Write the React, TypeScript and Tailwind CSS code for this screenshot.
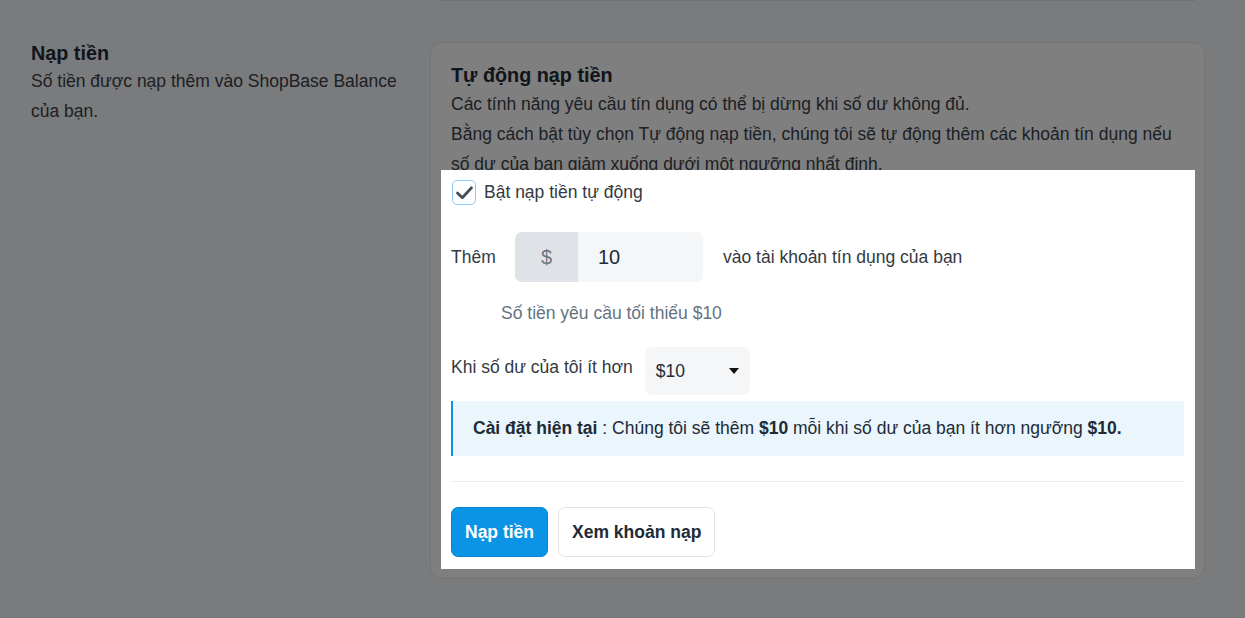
import React from "react";

const Check = () => (
  <svg viewBox="0 0 24 24" className="w-[21px] h-[21px]">
    <polyline
      points="4 12.5 9.5 18 20 6.5"
      fill="none"
      stroke="#454f5b"
      strokeWidth="3.2"
      strokeLinecap="round"
      strokeLinejoin="round"
    />
  </svg>
);

const Caret = () => (
  <svg viewBox="0 0 10 6" className="w-[12px] h-[6px]">
    <path d="M0 0 L10 0 L5 6 Z" fill="#111" />
  </svg>
);

export default function App() {
  return (
    <div
      className="relative w-full h-[618px] overflow-hidden bg-[#f4f6f8] text-[17.5px] text-[#3a4149]"
      style={{ fontFamily: '"Liberation Sans", Arial, sans-serif' }}
    >
      {/* Spotlight overlay */}
      <div className="absolute inset-0 z-10 bg-black/50" />

      <div className="flex pl-[31px] pr-[40px]">
        {/* Left column */}
        <div className="w-[372px] pt-[41px] shrink-0">
          <h2 className="text-[19.8px] font-bold leading-[24px] text-[#212b36]">Nạp tiền</h2>
          <p className="leading-[30px] mt-[1px]">
            Số tiền được nạp thêm vào ShopBase Balance của bạn.
          </p>
        </div>

        {/* Right column */}
        <div className="flex-1 ml-[27px]">
          <div className="h-px mx-[10px] bg-[#dfe3e8]" />
          <div className="mt-[41px] bg-white border border-[#e3e6ea] rounded-xl px-[20px] pt-[20px] pb-[19px]">
            <h3 className="text-[19.8px] font-bold leading-[24px] text-[#212b36]">Tự động nạp tiền</h3>
            <p className="leading-[30px] mt-[2px]">
              Các tính năng yêu cầu tín dụng có thể bị dừng khi số dư không đủ.
              <br />
              Bằng cách bật tùy chọn Tự động nạp tiền, chúng tôi sẽ tự động thêm các khoản tín dụng nếu
              số dư của bạn giảm xuống dưới một ngưỡng nhất định.
            </p>

            {/* Highlighted section */}
            <div className="relative z-20 bg-white -ml-[10px] -mr-[11px] -mt-[9px] -mb-[10px] pl-[10px] pr-[11px] pt-[10px] pb-[12px] text-[#333a42]">
              <label className="flex items-center gap-[8px] h-[25px]">
                <span className="w-[24px] h-[25px] ml-px border border-[#8ec9f5] rounded-[5px] flex items-center justify-center">
                  <Check />
                </span>
                <span>Bật nạp tiền tự động</span>
              </label>

              <div className="flex items-center mt-[27px] h-[50px]">
                <span className="w-[64px]">Thêm</span>
                <div className="flex h-[50px] w-[188px] rounded-[7px] overflow-hidden bg-[#f4f6f8]">
                  <div className="w-[63px] bg-[#dfe3e8] flex items-center justify-center text-[20px] text-[#6b7682]">
                    $
                  </div>
                  <div className="flex items-center pl-[20px] text-[20px] text-[#212b36]">10</div>
                </div>
                <span className="ml-[20px]">vào tài khoản tín dụng của bạn</span>
              </div>

              <p className="mt-[21px] ml-[50px] leading-[20px] text-[#637381]">
                Số tiền yêu cầu tối thiểu $10
              </p>

              <div className="flex items-center mt-[24px]">
                <span className="-mt-[8px]">Khi số dư của tôi ít hơn</span>
                <div className="ml-[12px] w-[105px] h-[48px] rounded-[7px] bg-[#f4f6f8] flex items-center justify-between pl-[11px] pr-[10px]">
                  <span className="text-[#212b36]">$10</span>
                  <Caret />
                </div>
              </div>

              <div className="mt-[6px] h-[55px] border-l-2 border-[#0b93e6] bg-[#eaf5fc] flex items-center pl-[20px] text-[#212b36]">
                <span>
                  <b>Cài đặt hiện tại</b> : Chúng tôi sẽ thêm <b>$10</b> mỗi khi số dư của bạn ít hơn
                  ngưỡng <b>$10.</b>
                </span>
              </div>

              <div className="mt-[25px] h-px bg-[#ececec]" />

              <div className="flex gap-[10px] mt-[25px]">
                <button className="h-[50px] px-[13px] rounded-[7px] bg-[#0b94e6] border border-[#0a85d0] text-white font-bold">
                  Nạp tiền
                </button>
                <button className="h-[50px] px-[13px] rounded-[7px] bg-white border border-[#dfe3e8] text-[#212b36] font-bold">
                  Xem khoản nạp
                </button>
              </div>
            </div>
          </div>
        </div>
      </div>
    </div>
  );
}
